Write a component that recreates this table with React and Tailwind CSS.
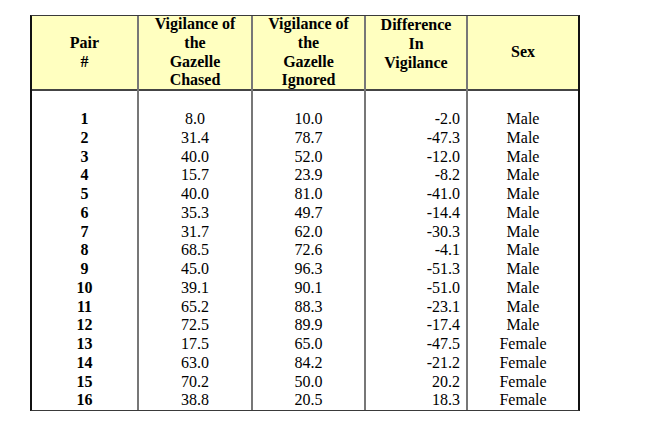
const rows = [
    [1, '8.0', '10.0', '-2.0', 'Male'],
    [2, '31.4', '78.7', '-47.3', 'Male'],
    [3, '40.0', '52.0', '-12.0', 'Male'],
    [4, '15.7', '23.9', '-8.2', 'Male'],
    [5, '40.0', '81.0', '-41.0', 'Male'],
    [6, '35.3', '49.7', '-14.4', 'Male'],
    [7, '31.7', '62.0', '-30.3', 'Male'],
    [8, '68.5', '72.6', '-4.1', 'Male'],
    [9, '45.0', '96.3', '-51.3', 'Male'],
    [10, '39.1', '90.1', '-51.0', 'Male'],
    [11, '65.2', '88.3', '-23.1', 'Male'],
    [12, '72.5', '89.9', '-17.4', 'Male'],
    [13, '17.5', '65.0', '-47.5', 'Female'],
    [14, '63.0', '84.2', '-21.2', 'Female'],
    [15, '70.2', '50.0', '20.2', 'Female'],
    [16, '38.8', '20.5', '18.3', 'Female'],
];

const columns = [
    { head: ['Pair', '#'], width: 'w-[107px]', align: 'text-center font-bold' },
    { head: ['Vigilance of', 'the', 'Gazelle', 'Chased'], width: 'w-[114px]', align: 'text-center' },
    { head: ['Vigilance of', 'the', 'Gazelle', 'Ignored'], width: 'w-[113px]', align: 'text-center' },
    { head: ['Difference', 'In', 'Vigilance'], width: 'w-[102px]', align: 'text-right pr-[6px]', headAlign: 'justify-start' },
    { head: ['Sex'], width: 'w-[110px]', align: 'text-center' },
];

export default function App() {
    return (
        <div className="h-[443px] w-[650px] bg-white pl-[30px] pt-[15px] font-['Liberation_Serif',serif] text-[16px] leading-[18.75px] text-black">
            <div className="flex w-fit border-y border-l-2 border-r-2 border-y-[#3a3a3a] border-l-[#111] border-r-[#111]">
                {columns.map((col, ci) => (
                    <div
                        key={ci}
                        className={`flex shrink-0 flex-col ${col.width} ${ci < columns.length - 1 ? 'border-r-2 border-r-[#777]' : ''}`}
                    >
                        <div className={`flex h-[75px] flex-col items-center border-b-2 border-b-[#444] bg-[#ffffc0] font-bold ${col.headAlign || 'justify-center'}`}>
                            {col.head.map((line) => (
                                <span key={line}>{line}</span>
                            ))}
                        </div>
                        <div className={`flex flex-col pt-[19px] ${col.align}`}>
                            {rows.map((r) => (
                                <span key={r[0]}>{r[ci]}</span>
                            ))}
                        </div>
                    </div>
                ))}
            </div>
        </div>
    );
}
